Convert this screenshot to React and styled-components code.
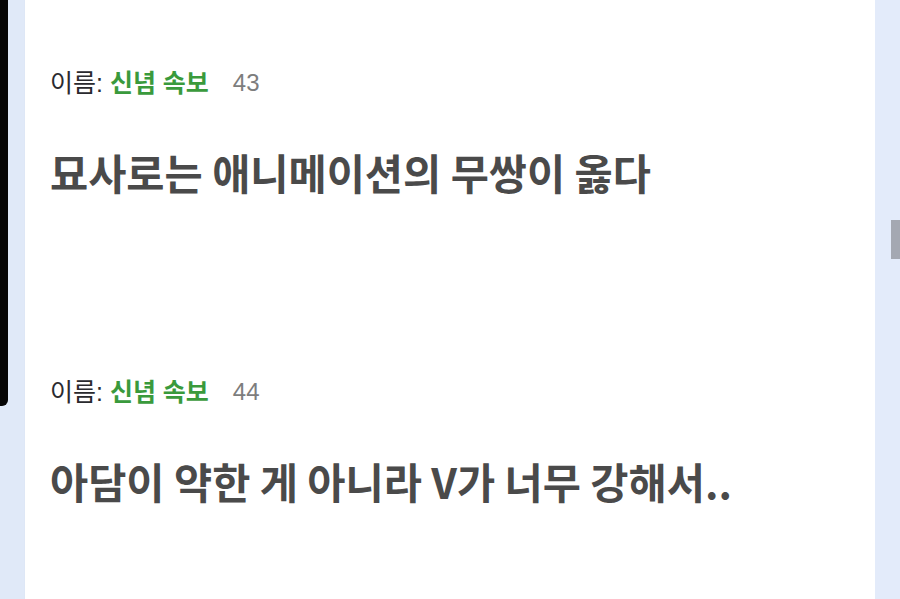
import React from "react";
import styled, { createGlobalStyle } from "styled-components";

const Global = createGlobalStyle`
  html, body { margin: 0; padding: 0; }
  body {
    background: #e4ebf9;
    font-family: "Liberation Sans", "Noto Sans CJK KR", sans-serif;
    overflow: hidden;
  }
`;

const Page = styled.div`
  display: flex;
  height: 599px;
  width: 900px;
  overflow: hidden;
`;

const LeftGutter = styled.div`
  width: 25px;
  flex: none;
  background: #e0e9f8;
`;

const DeviceEdge = styled.div`
  width: 8px;
  height: 406px;
  background: #050505;
  border-bottom-right-radius: 6px;
`;

const Card = styled.main`
  flex: 1;
  background: #ffffff;
  box-shadow: 1px 0 2px rgba(120, 130, 150, 0.25);
  padding: 68px 0 0 25px;
  display: flex;
  flex-direction: column;
  gap: 180px;
`;

const RightGutter = styled.div`
  width: 25px;
  flex: none;
  display: flex;
  justify-content: flex-end;
  background: #e3ebfa;
`;

const Thumb = styled.div`
  width: 9px;
  height: 39px;
  margin-top: 220px;
  background: #a4a8b2;
`;

const Post = styled.article`
  display: flex;
  flex-direction: column;
  gap: 49px;
`;

const Meta = styled.div`
  display: flex;
  align-items: center;
  height: 30px;
  font-size: 25px;
  line-height: 30px;
  white-space: pre;
`;

const Label = styled.span`
  color: #2a2a2e;
`;

const Author = styled.span`
  color: #3a9a3c;
  font-weight: 700;
`;

const Num = styled.span`
  color: #7d7d7d;
  font-size: 24px;
  margin-left: 24px;
`;

const Title = styled.h2`
  margin: 0;
  font-size: 41.5px;
  line-height: 50px;
  font-weight: 700;
  color: #4a4a4a;
  font-family: "Noto Sans CJK KR", "Liberation Sans", sans-serif;
  white-space: nowrap;
`;

const posts = [
  { author: "신념 속보", num: 43, title: "묘사로는 애니메이션의 무쌍이 옳다" },
  { author: "신념 속보", num: 44, title: "아담이 약한 게 아니라 V가 너무 강해서.." },
];

export default function App() {
  return (
    <>
      <Global />
      <Page>
        <LeftGutter>
          <DeviceEdge />
        </LeftGutter>
        <Card>
          {posts.map((p) => (
            <Post key={p.num}>
              <Meta>
                <Label>이름: </Label>
                <Author>{p.author}</Author>
                <Num>{p.num}</Num>
              </Meta>
              <Title>{p.title}</Title>
            </Post>
          ))}
        </Card>
        <RightGutter>
          <Thumb />
        </RightGutter>
      </Page>
    </>
  );
}
